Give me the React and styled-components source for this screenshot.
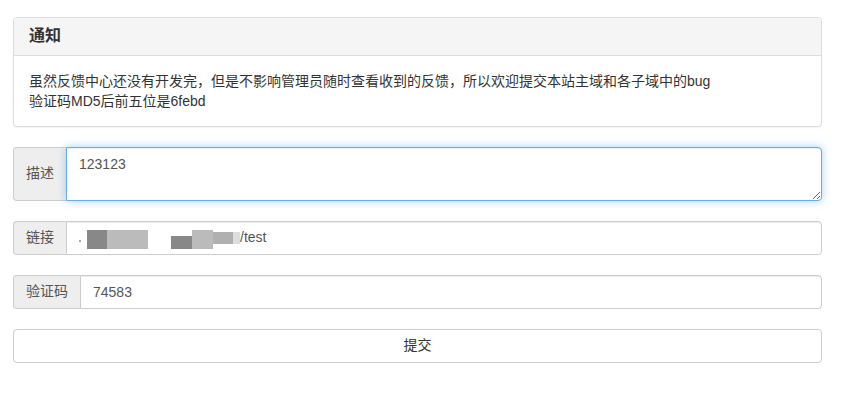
import styled, { createGlobalStyle } from "styled-components";

const GlobalStyle = createGlobalStyle`
  * { box-sizing: border-box; }
  body {
    margin: 0;
    background: #fff;
    font-family: "Liberation Sans", "Noto Sans CJK SC", sans-serif;
    font-size: 14px;
    line-height: 1.42857;
    color: #333;
  }
`;

const Container = styled.div`
  width: 809px;
  margin: 17px 0 0 13px;
`;

const Panel = styled.div`
  border: 1px solid #ddd;
  border-radius: 4px;
  margin-bottom: 20px;
  box-shadow: 0 1px 1px rgba(0, 0, 0, 0.05);
`;

const PanelHeading = styled.div`
  background: #f5f5f5;
  border-bottom: 1px solid #ddd;
  border-radius: 3px 3px 0 0;
  padding: 9px 15px 10px;
`;

const PanelTitle = styled.h3`
  margin: 0;
  font-size: 16px;
  font-weight: bold;
  line-height: 18px;
  color: #333;
`;

const PanelBody = styled.div`
  padding: 15px;
  font-size: 14px;
  line-height: 20px;
`;

const FormGroup = styled.div`
  display: flex;
  margin-bottom: 20px;
`;

const Addon = styled.span`
  display: flex;
  align-items: center;
  padding: 0 12px;
  background: #eee;
  border: 1px solid #ccc;
  border-right: 0;
  border-radius: 4px 0 0 4px;
  color: #555;
  font-size: 14px;
  white-space: nowrap;
`;

const TextArea = styled.textarea`
  flex: 1;
  height: 54px;
  padding: 6px 12px;
  font: inherit;
  font-size: 14px;
  line-height: 20px;
  color: #555;
  border: 1px solid #66afe9;
  border-radius: 0 4px 4px 0;
  outline: 0;
  box-shadow: inset 0 1px 1px rgba(0, 0, 0, 0.075), 0 0 8px rgba(102, 175, 233, 0.6);
  resize: vertical;
`;

const FakeInput = styled.div`
  flex: 1;
  height: 34px;
  display: flex;
  align-items: center;
  padding: 0 12px;
  font-size: 14px;
  color: #555;
  border: 1px solid #ccc;
  border-radius: 0 4px 4px 0;
  box-shadow: inset 0 1px 1px rgba(0, 0, 0, 0.075);
`;

const Input = styled.input`
  flex: 1;
  height: 34px;
  padding: 6px 12px;
  font: inherit;
  font-size: 14px;
  color: #555;
  border: 1px solid #ccc;
  border-radius: 0 4px 4px 0;
  outline: 0;
  box-shadow: inset 0 1px 1px rgba(0, 0, 0, 0.075);
`;

const Redact = styled.span`
  display: inline-block;
  width: ${(p) => p.$w}px;
  height: ${(p) => p.$h || 18}px;
  margin-top: ${(p) => p.$top || 0}px;
  margin-left: ${(p) => p.$gap || 0}px;
  background: ${(p) => p.$c};
`;

const Dot = styled.span`
  display: inline-block;
  width: 2px;
  height: 2px;
  background: #aaa;
  margin-top: 6px;
  margin-right: 6px;
`;

const Button = styled.button`
  display: block;
  width: 100%;
  height: 34px;
  background: #fff;
  border: 1px solid #ccc;
  border-radius: 4px;
  font: inherit;
  font-size: 14px;
  color: #333;
  cursor: pointer;
`;

export default function App() {
  return (
    <>
      <GlobalStyle />
      <Container>
        <Panel>
          <PanelHeading>
            <PanelTitle>通知</PanelTitle>
          </PanelHeading>
          <PanelBody>
            虽然反馈中心还没有开发完，但是不影响管理员随时查看收到的反馈，所以欢迎提交本站主域和各子域中的bug
            <br />
            验证码MD5后前五位是6febd
          </PanelBody>
        </Panel>
        <FormGroup>
          <Addon>描述</Addon>
          <TextArea defaultValue="123123" autoFocus rows={2} />
        </FormGroup>
        <FormGroup>
          <Addon>链接</Addon>
          <FakeInput>
            <Dot />
            <Redact $w={20} $h={19} $top={2} $c="#888" />
            <Redact $w={41} $h={19} $top={2} $c="#bbb" />
            <Redact $w={21} $h={13} $top={8} $gap={23} $c="#888" />
            <Redact $w={21} $h={19} $top={2} $c="#bbb" />
            <Redact $w={20} $h={12} $top={-1} $c="#b0b0b0" />
            <Redact $w={7} $h={12} $top={-1} $c="#ddd" />
            <span>/test</span>
          </FakeInput>
        </FormGroup>
        <FormGroup>
          <Addon>验证码</Addon>
          <Input defaultValue="74583" />
        </FormGroup>
        <Button>提交</Button>
      </Container>
    </>
  );
}
